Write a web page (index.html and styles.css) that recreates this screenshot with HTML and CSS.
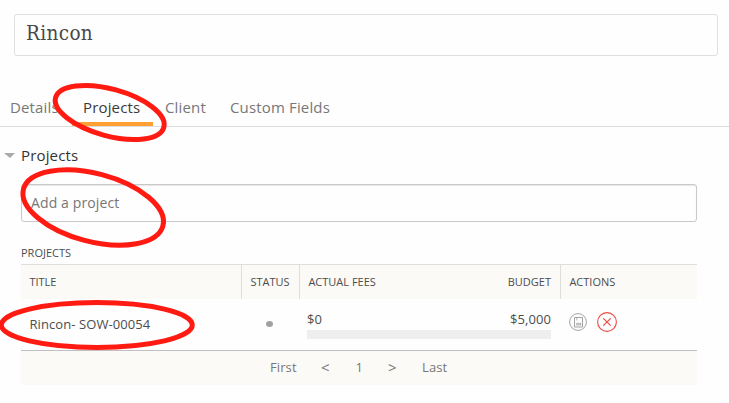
FILE: index.html
```html
<!DOCTYPE html>
<html lang="en">
<head>
<meta charset="utf-8">
<title>Rincon</title>
<link rel="stylesheet" href="styles.css">
</head>
<body>
<div class="page">
  <div class="name-field"><span>Rincon</span></div>
  <nav class="tabs">
    <a class="tab tab-details">Details</a>
    <a class="tab tab-active">Projects</a>
    <a class="tab tab-client">Client</a>
    <a class="tab tab-custom">Custom Fields</a>
  </nav>
  <section class="section">
    <h2 class="section-title"><span class="caret"></span>Projects</h2>
    <div class="add-field">Add a project</div>
    <div class="caption">PROJECTS</div>
    <div class="table">
      <div class="row head">
        <div class="cell">TITLE</div>
        <div class="cell">STATUS</div>
        <div class="cell fees-head"><span>ACTUAL FEES</span><span>BUDGET</span></div>
        <div class="cell">ACTIONS</div>
      </div>
      <div class="row item">
        <div class="title-cell">Rincon- SOW-00054</div>
        <div class="status-cell"><span class="dot"></span></div>
        <div class="fees-cell">
          <div class="amounts"><span>$0</span><span>$5,000</span></div>
          <div class="bar"></div>
        </div>
        <div class="actions-cell">
          <svg class="icon-archive" width="18" height="18" viewBox="0 0 18 18" fill="none" stroke="#a3a3a3">
            <circle cx="9" cy="9" r="8.4"/>
            <path d="M5.5 4.5h8v9.5h-8z"/>
            <path d="M7.8 5v2.5M7 11h5.500M8 9.700v3M9.700 9.700v3M11.400 9.700v3" stroke-width=".8"/>
          </svg>
          <svg class="icon-remove" width="20" height="20" viewBox="0 0 20 20" fill="none" stroke="#eb4a42">
            <circle cx="10" cy="10" r="9.400" stroke-width="1.100"/>
            <path d="M6.300 6.300l7.400 7.400M13.700 6.300l-7.400 7.400" stroke-width="1.200"/>
          </svg>
        </div>
      </div>
      <div class="pager"><span class="first">First</span><span class="prev">&lt;</span><span class="num">1</span><span class="next">&gt;</span><span>Last</span></div>
    </div>
  </section>
  <svg class="marks" width="729" height="403" viewBox="0 0 729 403" fill="none" stroke="#ff1a12" stroke-width="5">
    <ellipse cx="109.700" cy="112.500" rx="56.100" ry="23.400" transform="rotate(15.300 109.700 112.500)"/>
    <ellipse cx="93.200" cy="207.500" rx="72.100" ry="34" transform="rotate(14.800 93.200 207.500)"/>
    <ellipse cx="96.800" cy="325" rx="95.500" ry="22.400"/>
  </svg>
</div>
</body>
</html>
```
FILE: styles.css
```css
* { box-sizing: border-box; }
body {
  margin: 0;
  background: #fefefe;
  color: #4d4d4d;
  font-family: "Open Sans", sans-serif;
}
.page {
  position: relative;
  width: 729px;
  height: 403px;
  overflow: hidden;
  padding-top: 14px;
}
.name-field {
  width: 704px;
  height: 42px;
  margin-left: 14px;
  padding-left: 11px;
  border: 1px solid #dfdfdf;
  border-radius: 3px;
  font: 20.5px/36px "DejaVu Serif Condensed", "DejaVu Serif", serif;
  letter-spacing: .35px;
  color: #484848;
}
.tabs {
  display: flex;
  height: 41px;
  margin-top: 30px;
  border-bottom: 1px solid #dcdcdc;
  padding-left: 10px;
  font-size: 15px;
  letter-spacing: .15px;
  line-height: 20px;
  color: #777;
}
.tab { padding-top: 11px; white-space: nowrap; }
.tab-details { width: 62px; }
.tab-active {
  width: 81px;
  height: 40px;
  padding-left: 11px;
  color: #3a3a3a;
  background: linear-gradient(#ffa033, #ffa033) 0 36px / 100% 4px no-repeat;
}
.tab-client { width: 77px; padding-left: 12px; }
.section { padding: 17px 32px 0 21px; }
.section-title {
  display: flex;
  align-items: center;
  margin: 0 0 0 -17px;
  font-size: 15px;
  font-weight: 400;
  letter-spacing: .15px;
  line-height: 22px;
  color: #333;
}
.caret {
  margin-right: 6px;
  border: 5.5px solid transparent;
  border-left-width: 6px;
  border-top-color: #aaa;
  border-bottom: 0;
}
.add-field {
  height: 38px;
  margin-top: 18px;
  padding-left: 9px;
  border: 1px solid #c9c9c9;
  border-radius: 3px;
  box-shadow: inset 0 1px 1px #e6e6e6;
  font-size: 14px;
  letter-spacing: .12px;
  line-height: 36px;
  color: #767676;
}
.caption { margin-top: 23px; height: 19px; font-size: 11px; line-height: 16px; }
.row { display: grid; grid-template-columns: 220px 58px 261px 1fr; }
.head {
  height: 35px;
  background: #fbfaf6;
  border-top: 1px solid #dededc;
  font-size: 11px;
  line-height: 34px;
}
.cell { padding-left: 8.4px; border-left: 1px solid #dededc; white-space: nowrap; }
.cell:first-child { border-left: 0; }
.fees-head { display: flex; justify-content: space-between; padding-right: 9px; }
.item { height: 52px; border-bottom: 1px solid #bfbfbf; font-size: 13px; }
.title-cell { padding-left: 8.4px; letter-spacing: .09px; line-height: 51px; }
.status-cell { padding: 22px 0 0 25px; }
.dot { display: block; width: 7px; height: 6px; border-radius: 50%; background: #a0a0a0; }
.fees-cell { padding: 11px 9px 0 8px; }
.amounts { display: flex; justify-content: space-between; line-height: 18px; letter-spacing: .09px; }
.bar { height: 9px; margin-top: 2px; background: #eee; }
.actions-cell { display: flex; padding: 13px 0 0 9px; }
.icon-archive { margin: 1px 10px 0 0; }
.pager {
  display: flex;
  height: 34px;
  padding-left: 249px;
  background: #fbfaf6;
  font-size: 13px;
  letter-spacing: .1px;
  line-height: 33px;
  color: #777;
}
.prev, .next { font-size: 15px; }
.first { width: 51px; }
.prev { width: 34.500px; }
.num { width: 32.500px; }
.next { width: 34px; }
.marks { position: absolute; left: 0; top: 0; }
```
